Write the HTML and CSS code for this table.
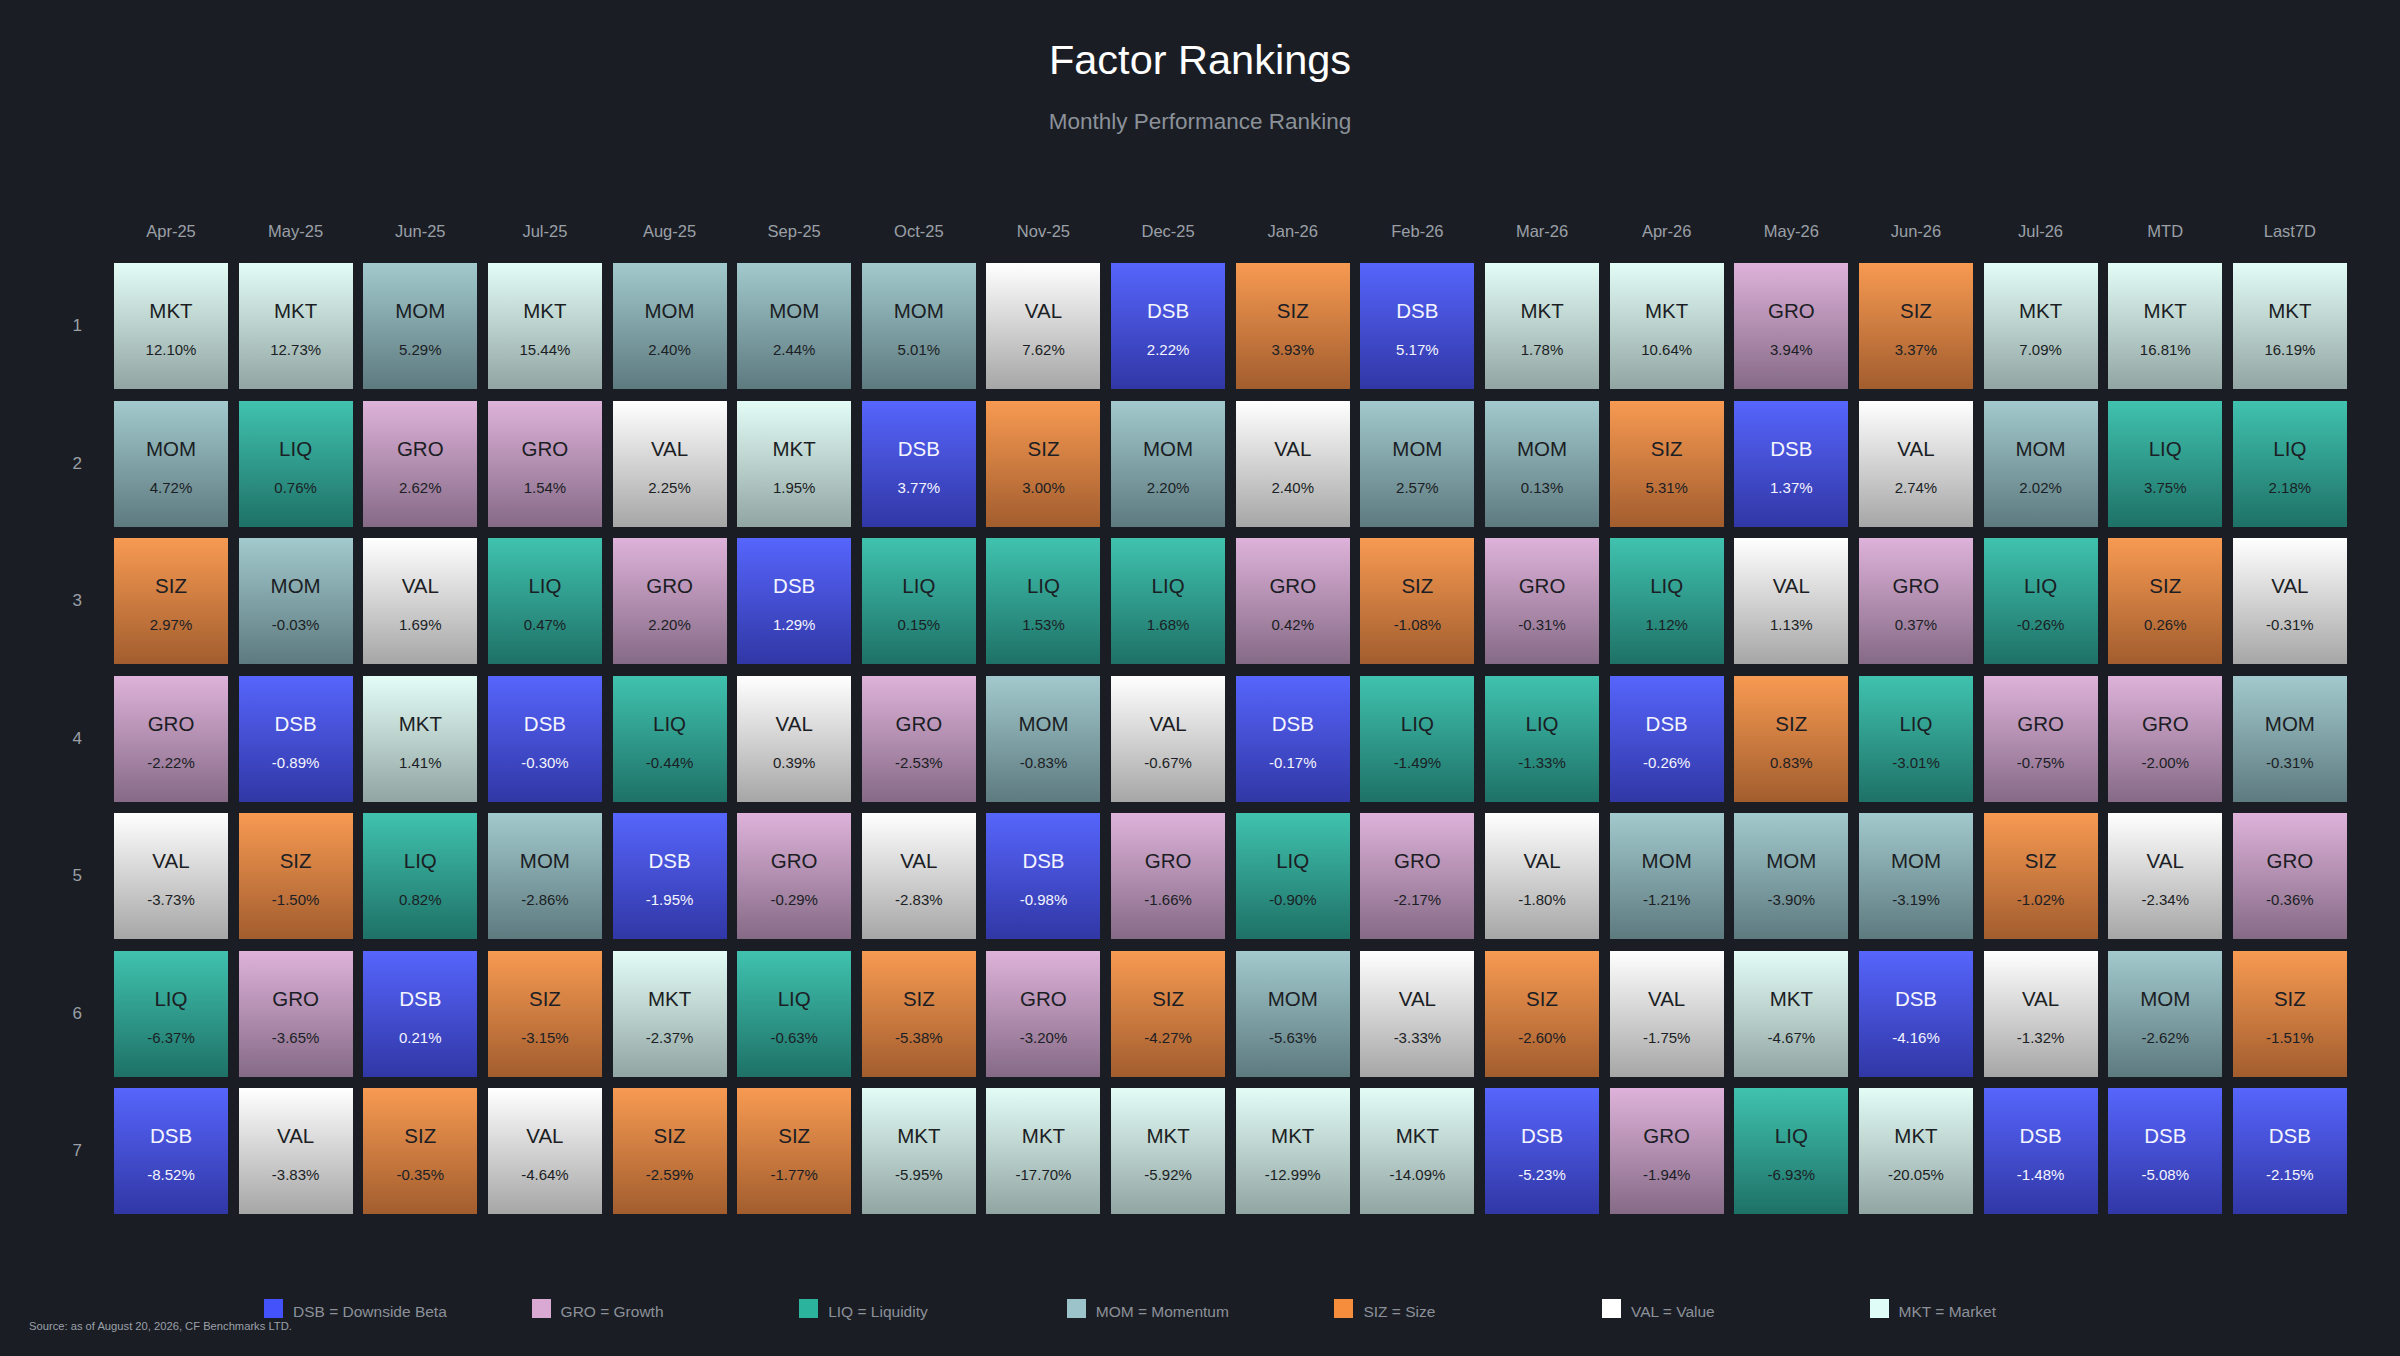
FILE: index.html
```html
<!DOCTYPE html>
<html lang="en">
<head>
<meta charset="utf-8">
<title>Factor Rankings</title>
<link rel="stylesheet" href="styles.css">
</head>
<body>
<div class="page">
  <header class="head">
    <h1 class="title">Factor Rankings</h1>
    <p class="subtitle">Monthly Performance Ranking</p>
  </header>

  <div class="grid">
    <div class="corner"></div>
    <div class="col">Apr-25</div><div class="col">May-25</div><div class="col">Jun-25</div><div class="col">Jul-25</div><div class="col">Aug-25</div><div class="col">Sep-25</div><div class="col">Oct-25</div><div class="col">Nov-25</div><div class="col">Dec-25</div><div class="col">Jan-26</div><div class="col">Feb-26</div><div class="col">Mar-26</div><div class="col">Apr-26</div><div class="col">May-26</div><div class="col">Jun-26</div><div class="col">Jul-26</div><div class="col">MTD</div><div class="col">Last7D</div>

    <div class="rank">1</div>
    <div class="cell mkt"><span class="f">MKT</span><span class="v">12.10%</span></div>
    <div class="cell mkt"><span class="f">MKT</span><span class="v">12.73%</span></div>
    <div class="cell mom"><span class="f">MOM</span><span class="v">5.29%</span></div>
    <div class="cell mkt"><span class="f">MKT</span><span class="v">15.44%</span></div>
    <div class="cell mom"><span class="f">MOM</span><span class="v">2.40%</span></div>
    <div class="cell mom"><span class="f">MOM</span><span class="v">2.44%</span></div>
    <div class="cell mom"><span class="f">MOM</span><span class="v">5.01%</span></div>
    <div class="cell val"><span class="f">VAL</span><span class="v">7.62%</span></div>
    <div class="cell dsb"><span class="f">DSB</span><span class="v">2.22%</span></div>
    <div class="cell siz"><span class="f">SIZ</span><span class="v">3.93%</span></div>
    <div class="cell dsb"><span class="f">DSB</span><span class="v">5.17%</span></div>
    <div class="cell mkt"><span class="f">MKT</span><span class="v">1.78%</span></div>
    <div class="cell mkt"><span class="f">MKT</span><span class="v">10.64%</span></div>
    <div class="cell gro"><span class="f">GRO</span><span class="v">3.94%</span></div>
    <div class="cell siz"><span class="f">SIZ</span><span class="v">3.37%</span></div>
    <div class="cell mkt"><span class="f">MKT</span><span class="v">7.09%</span></div>
    <div class="cell mkt"><span class="f">MKT</span><span class="v">16.81%</span></div>
    <div class="cell mkt"><span class="f">MKT</span><span class="v">16.19%</span></div>

    <div class="rank">2</div>
    <div class="cell mom"><span class="f">MOM</span><span class="v">4.72%</span></div>
    <div class="cell liq"><span class="f">LIQ</span><span class="v">0.76%</span></div>
    <div class="cell gro"><span class="f">GRO</span><span class="v">2.62%</span></div>
    <div class="cell gro"><span class="f">GRO</span><span class="v">1.54%</span></div>
    <div class="cell val"><span class="f">VAL</span><span class="v">2.25%</span></div>
    <div class="cell mkt"><span class="f">MKT</span><span class="v">1.95%</span></div>
    <div class="cell dsb"><span class="f">DSB</span><span class="v">3.77%</span></div>
    <div class="cell siz"><span class="f">SIZ</span><span class="v">3.00%</span></div>
    <div class="cell mom"><span class="f">MOM</span><span class="v">2.20%</span></div>
    <div class="cell val"><span class="f">VAL</span><span class="v">2.40%</span></div>
    <div class="cell mom"><span class="f">MOM</span><span class="v">2.57%</span></div>
    <div class="cell mom"><span class="f">MOM</span><span class="v">0.13%</span></div>
    <div class="cell siz"><span class="f">SIZ</span><span class="v">5.31%</span></div>
    <div class="cell dsb"><span class="f">DSB</span><span class="v">1.37%</span></div>
    <div class="cell val"><span class="f">VAL</span><span class="v">2.74%</span></div>
    <div class="cell mom"><span class="f">MOM</span><span class="v">2.02%</span></div>
    <div class="cell liq"><span class="f">LIQ</span><span class="v">3.75%</span></div>
    <div class="cell liq"><span class="f">LIQ</span><span class="v">2.18%</span></div>

    <div class="rank">3</div>
    <div class="cell siz"><span class="f">SIZ</span><span class="v">2.97%</span></div>
    <div class="cell mom"><span class="f">MOM</span><span class="v">-0.03%</span></div>
    <div class="cell val"><span class="f">VAL</span><span class="v">1.69%</span></div>
    <div class="cell liq"><span class="f">LIQ</span><span class="v">0.47%</span></div>
    <div class="cell gro"><span class="f">GRO</span><span class="v">2.20%</span></div>
    <div class="cell dsb"><span class="f">DSB</span><span class="v">1.29%</span></div>
    <div class="cell liq"><span class="f">LIQ</span><span class="v">0.15%</span></div>
    <div class="cell liq"><span class="f">LIQ</span><span class="v">1.53%</span></div>
    <div class="cell liq"><span class="f">LIQ</span><span class="v">1.68%</span></div>
    <div class="cell gro"><span class="f">GRO</span><span class="v">0.42%</span></div>
    <div class="cell siz"><span class="f">SIZ</span><span class="v">-1.08%</span></div>
    <div class="cell gro"><span class="f">GRO</span><span class="v">-0.31%</span></div>
    <div class="cell liq"><span class="f">LIQ</span><span class="v">1.12%</span></div>
    <div class="cell val"><span class="f">VAL</span><span class="v">1.13%</span></div>
    <div class="cell gro"><span class="f">GRO</span><span class="v">0.37%</span></div>
    <div class="cell liq"><span class="f">LIQ</span><span class="v">-0.26%</span></div>
    <div class="cell siz"><span class="f">SIZ</span><span class="v">0.26%</span></div>
    <div class="cell val"><span class="f">VAL</span><span class="v">-0.31%</span></div>

    <div class="rank">4</div>
    <div class="cell gro"><span class="f">GRO</span><span class="v">-2.22%</span></div>
    <div class="cell dsb"><span class="f">DSB</span><span class="v">-0.89%</span></div>
    <div class="cell mkt"><span class="f">MKT</span><span class="v">1.41%</span></div>
    <div class="cell dsb"><span class="f">DSB</span><span class="v">-0.30%</span></div>
    <div class="cell liq"><span class="f">LIQ</span><span class="v">-0.44%</span></div>
    <div class="cell val"><span class="f">VAL</span><span class="v">0.39%</span></div>
    <div class="cell gro"><span class="f">GRO</span><span class="v">-2.53%</span></div>
    <div class="cell mom"><span class="f">MOM</span><span class="v">-0.83%</span></div>
    <div class="cell val"><span class="f">VAL</span><span class="v">-0.67%</span></div>
    <div class="cell dsb"><span class="f">DSB</span><span class="v">-0.17%</span></div>
    <div class="cell liq"><span class="f">LIQ</span><span class="v">-1.49%</span></div>
    <div class="cell liq"><span class="f">LIQ</span><span class="v">-1.33%</span></div>
    <div class="cell dsb"><span class="f">DSB</span><span class="v">-0.26%</span></div>
    <div class="cell siz"><span class="f">SIZ</span><span class="v">0.83%</span></div>
    <div class="cell liq"><span class="f">LIQ</span><span class="v">-3.01%</span></div>
    <div class="cell gro"><span class="f">GRO</span><span class="v">-0.75%</span></div>
    <div class="cell gro"><span class="f">GRO</span><span class="v">-2.00%</span></div>
    <div class="cell mom"><span class="f">MOM</span><span class="v">-0.31%</span></div>

    <div class="rank">5</div>
    <div class="cell val"><span class="f">VAL</span><span class="v">-3.73%</span></div>
    <div class="cell siz"><span class="f">SIZ</span><span class="v">-1.50%</span></div>
    <div class="cell liq"><span class="f">LIQ</span><span class="v">0.82%</span></div>
    <div class="cell mom"><span class="f">MOM</span><span class="v">-2.86%</span></div>
    <div class="cell dsb"><span class="f">DSB</span><span class="v">-1.95%</span></div>
    <div class="cell gro"><span class="f">GRO</span><span class="v">-0.29%</span></div>
    <div class="cell val"><span class="f">VAL</span><span class="v">-2.83%</span></div>
    <div class="cell dsb"><span class="f">DSB</span><span class="v">-0.98%</span></div>
    <div class="cell gro"><span class="f">GRO</span><span class="v">-1.66%</span></div>
    <div class="cell liq"><span class="f">LIQ</span><span class="v">-0.90%</span></div>
    <div class="cell gro"><span class="f">GRO</span><span class="v">-2.17%</span></div>
    <div class="cell val"><span class="f">VAL</span><span class="v">-1.80%</span></div>
    <div class="cell mom"><span class="f">MOM</span><span class="v">-1.21%</span></div>
    <div class="cell mom"><span class="f">MOM</span><span class="v">-3.90%</span></div>
    <div class="cell mom"><span class="f">MOM</span><span class="v">-3.19%</span></div>
    <div class="cell siz"><span class="f">SIZ</span><span class="v">-1.02%</span></div>
    <div class="cell val"><span class="f">VAL</span><span class="v">-2.34%</span></div>
    <div class="cell gro"><span class="f">GRO</span><span class="v">-0.36%</span></div>

    <div class="rank">6</div>
    <div class="cell liq"><span class="f">LIQ</span><span class="v">-6.37%</span></div>
    <div class="cell gro"><span class="f">GRO</span><span class="v">-3.65%</span></div>
    <div class="cell dsb"><span class="f">DSB</span><span class="v">0.21%</span></div>
    <div class="cell siz"><span class="f">SIZ</span><span class="v">-3.15%</span></div>
    <div class="cell mkt"><span class="f">MKT</span><span class="v">-2.37%</span></div>
    <div class="cell liq"><span class="f">LIQ</span><span class="v">-0.63%</span></div>
    <div class="cell siz"><span class="f">SIZ</span><span class="v">-5.38%</span></div>
    <div class="cell gro"><span class="f">GRO</span><span class="v">-3.20%</span></div>
    <div class="cell siz"><span class="f">SIZ</span><span class="v">-4.27%</span></div>
    <div class="cell mom"><span class="f">MOM</span><span class="v">-5.63%</span></div>
    <div class="cell val"><span class="f">VAL</span><span class="v">-3.33%</span></div>
    <div class="cell siz"><span class="f">SIZ</span><span class="v">-2.60%</span></div>
    <div class="cell val"><span class="f">VAL</span><span class="v">-1.75%</span></div>
    <div class="cell mkt"><span class="f">MKT</span><span class="v">-4.67%</span></div>
    <div class="cell dsb"><span class="f">DSB</span><span class="v">-4.16%</span></div>
    <div class="cell val"><span class="f">VAL</span><span class="v">-1.32%</span></div>
    <div class="cell mom"><span class="f">MOM</span><span class="v">-2.62%</span></div>
    <div class="cell siz"><span class="f">SIZ</span><span class="v">-1.51%</span></div>

    <div class="rank">7</div>
    <div class="cell dsb"><span class="f">DSB</span><span class="v">-8.52%</span></div>
    <div class="cell val"><span class="f">VAL</span><span class="v">-3.83%</span></div>
    <div class="cell siz"><span class="f">SIZ</span><span class="v">-0.35%</span></div>
    <div class="cell val"><span class="f">VAL</span><span class="v">-4.64%</span></div>
    <div class="cell siz"><span class="f">SIZ</span><span class="v">-2.59%</span></div>
    <div class="cell siz"><span class="f">SIZ</span><span class="v">-1.77%</span></div>
    <div class="cell mkt"><span class="f">MKT</span><span class="v">-5.95%</span></div>
    <div class="cell mkt"><span class="f">MKT</span><span class="v">-17.70%</span></div>
    <div class="cell mkt"><span class="f">MKT</span><span class="v">-5.92%</span></div>
    <div class="cell mkt"><span class="f">MKT</span><span class="v">-12.99%</span></div>
    <div class="cell mkt"><span class="f">MKT</span><span class="v">-14.09%</span></div>
    <div class="cell dsb"><span class="f">DSB</span><span class="v">-5.23%</span></div>
    <div class="cell gro"><span class="f">GRO</span><span class="v">-1.94%</span></div>
    <div class="cell liq"><span class="f">LIQ</span><span class="v">-6.93%</span></div>
    <div class="cell mkt"><span class="f">MKT</span><span class="v">-20.05%</span></div>
    <div class="cell dsb"><span class="f">DSB</span><span class="v">-1.48%</span></div>
    <div class="cell dsb"><span class="f">DSB</span><span class="v">-5.08%</span></div>
    <div class="cell dsb"><span class="f">DSB</span><span class="v">-2.15%</span></div>
  </div>

  <footer class="foot">
    <div class="legend">
      <div class="item"><span class="sw sw-dsb"></span><span class="lt">DSB = Downside Beta</span></div>
      <div class="item"><span class="sw sw-gro"></span><span class="lt">GRO = Growth</span></div>
      <div class="item"><span class="sw sw-liq"></span><span class="lt">LIQ = Liquidity</span></div>
      <div class="item"><span class="sw sw-mom"></span><span class="lt">MOM = Momentum</span></div>
      <div class="item"><span class="sw sw-siz"></span><span class="lt">SIZ = Size</span></div>
      <div class="item"><span class="sw sw-val"></span><span class="lt">VAL = Value</span></div>
      <div class="item"><span class="sw sw-mkt"></span><span class="lt">MKT = Market</span></div>
    </div>
    <p class="source">Source: as of August 20, 2026, CF Benchmarks LTD.</p>
  </footer>
</div>
</body>
</html>
```

FILE: styles.css
```css
html, body {
  margin: 0;
  padding: 0;
  background: #1a1d24;
}

body {
  font-family: "Liberation Sans", Arial, Helvetica, sans-serif;
  color: #e8e8e8;
}

.page {
  width: 2400px;
  height: 1356px;
  overflow: hidden;
}

.head {
  padding-top: 36px;
  text-align: center;
}

.title {
  margin: 0;
  font-size: 41.5px;
  line-height: 48px;
  font-weight: 400;
  color: #ffffff;
}

.subtitle {
  margin: 24px 0 0;
  font-size: 22.5px;
  line-height: 28px;
  color: #8b9199;
}

.grid {
  margin-top: 75.5px;
  margin-left: 51.35px;
  display: grid;
  grid-template-columns: 52px repeat(18, 114px);
  grid-template-rows: 40px repeat(7, 126px);
  column-gap: 10.65px;
  row-gap: 11.5px;
}

.col {
  display: flex;
  align-items: center;
  justify-content: center;
  font-size: 16.5px;
  color: #9ba0a7;
}

.rank {
  display: flex;
  align-items: center;
  justify-content: center;
  font-size: 17px;
  color: #9ba0a7;
}

.cell {
  display: flex;
  flex-direction: column;
  align-items: center;
  padding-top: 36px;
  box-sizing: border-box;
  color: #1b1e24;
}

.cell .f {
  font-size: 20.5px;
  line-height: 24px;
}

.cell .v {
  margin-top: 18px;
  font-size: 15px;
  line-height: 18px;
}

.mkt { background: linear-gradient(180deg, #e3fcf6 0%, #91a5a2 100%); }
.mom { background: linear-gradient(180deg, #a2c9cd 0%, #5d7a7f 100%); }
.val { background: linear-gradient(180deg, #ffffff 0%, #a6a6a6 100%); }
.dsb { background: linear-gradient(180deg, #5665fc 0%, #3137a5 100%); color: #f4f5ff; }
.siz { background: linear-gradient(180deg, #f79a52 0%, #a25d2e 100%); }
.gro { background: linear-gradient(180deg, #deb2da 0%, #856a86 100%); }
.liq { background: linear-gradient(180deg, #40c2af 0%, #1e7166 100%); }

.foot {
  margin-top: 85px;
}

.legend {
  display: flex;
  padding-left: 264px;
}

.item {
  display: flex;
  align-items: flex-start;
  width: 267.6px;
  height: 19px;
  flex: none;
}

.sw {
  width: 19px;
  height: 19px;
  flex: none;
}

.lt {
  margin-left: 10px;
  margin-top: 3px;
  font-size: 15.5px;
  line-height: 19px;
  color: #8c9199;
  white-space: nowrap;
}

.sw-dsb { background: #4352fa; }
.sw-gro { background: #d9a9d4; }
.sw-liq { background: #2bb39e; }
.sw-mom { background: #9cc3c9; }
.sw-siz { background: #f58d3d; }
.sw-val { background: #ffffff; }
.sw-mkt { background: #e0fcf6; }

.source {
  margin: 1.5px 0 0;
  padding-left: 29px;
  font-size: 11.2px;
  line-height: 13px;
  color: #9aa0a8;
}
```
